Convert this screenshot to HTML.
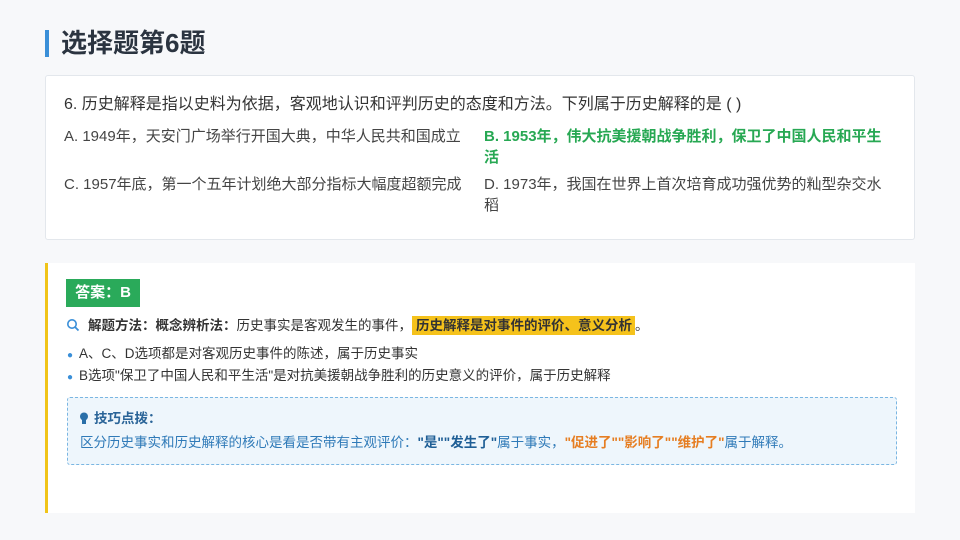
<!DOCTYPE html><html><head><meta charset="utf-8"><style>
*{margin:0;padding:0;box-sizing:border-box}
body{width:960px;height:540px;background:#f7f8fa;font-family:"Liberation Sans","Noto Sans CJK SC",sans-serif;position:relative;overflow:hidden;color:#333}
.abs{position:absolute;white-space:nowrap}
</style></head><body>
<div class="abs" style="left:45px;top:30px;width:4px;height:27px;background:#3a8fd8"></div>
<div class="abs" style="left:61px;top:24px;font-size:26px;font-weight:bold;color:#2b3440;line-height:38px">选择题第6题</div>
<div class="abs" style="left:45px;top:75px;width:870px;height:165px;background:#fff;border:1px solid #e3e7ec;border-radius:3px"></div>
<div class="abs" style="left:64px;top:94px;font-size:16px;line-height:22px;color:#333">6. 历史解释是指以史料为依据，客观地认识和评判历史的态度和方法。下列属于历史解释的是 ( )</div>
<div class="abs" style="left:64px;top:126px;font-size:15px;line-height:21px;color:#444">A. 1949年，天安门广场举行开国大典，中华人民共和国成立</div>
<div class="abs" style="left:484px;top:126px;font-size:15px;line-height:21px;color:#27a853;font-weight:bold;white-space:normal;width:412px">B. 1953年，伟大抗美援朝战争胜利，保卫了中国人民和平生活</div>
<div class="abs" style="left:64px;top:174px;font-size:15px;line-height:21px;color:#444">C. 1957年底，第一个五年计划绝大部分指标大幅度超额完成</div>
<div class="abs" style="left:484px;top:174px;font-size:15px;line-height:21px;color:#444;white-space:normal;width:410px">D. 1973年，我国在世界上首次培育成功强优势的籼型杂交水稻</div>
<div class="abs" style="left:45px;top:263px;width:870px;height:250px;background:#fff;border-left:3px solid #f0c419"></div>
<div class="abs" style="left:66px;top:279px;width:74px;height:28px;background:#2aaa5a;color:#fff;font-weight:bold;font-size:15px;line-height:28px;text-align:center">答案：B</div>
<svg class="abs" style="left:66px;top:318px" width="14" height="14" viewBox="0 0 14 14"><circle cx="6" cy="6" r="4.2" fill="none" stroke="#3a8fd8" stroke-width="1.6"/><path d="M9 9l3.5 3.5" stroke="#3a8fd8" stroke-width="1.8"/></svg>
<div class="abs" style="left:88px;top:316px;font-size:13.5px;line-height:20px;color:#333"><b>解题方法：概念辨析法：</b>历史事实是客观发生的事件，<b style="background:#f5c21b;padding:2px 3px 2px 4px">历史解释是对事件的评价、意义分析</b>。</div>
<div class="abs" style="left:67px;top:344px;font-size:13.5px;line-height:20px;color:#333"><span style="color:#3a8fd8;font-size:10px;margin-right:6px">●</span>A、C、D选项都是对客观历史事件的陈述，属于历史事实</div>
<div class="abs" style="left:67px;top:366px;font-size:13.5px;line-height:20px;color:#333"><span style="color:#3a8fd8;font-size:10px;margin-right:6px">●</span>B选项"保卫了中国人民和平生活"是对抗美援朝战争胜利的历史意义的评价，属于历史解释</div>
<div class="abs" style="left:67px;top:397px;width:830px;height:68px;background:#eef6fc;border:1px dashed #7ab6e2;border-radius:3px"></div>
<svg class="abs" style="left:79px;top:412px" width="10" height="13" viewBox="0 0 10 13"><circle cx="5" cy="4.5" r="4" fill="#2a6fa8"/><rect x="3" y="8" width="4" height="4" fill="#2a6fa8"/></svg>
<div class="abs" style="left:94px;top:409px;font-size:13.5px;line-height:20px;color:#2a6498;font-weight:bold">技巧点拨：</div>
<div class="abs" style="left:80px;top:433px;font-size:13.5px;line-height:20px;color:#2f7ab8">区分历史事实和历史解释的核心是看是否带有主观评价：<b style="color:#1f5f96">"是""发生了"</b>属于事实，<b style="color:#e67e22">"促进了""影响了""维护了"</b>属于解释。</div>
</body></html>
